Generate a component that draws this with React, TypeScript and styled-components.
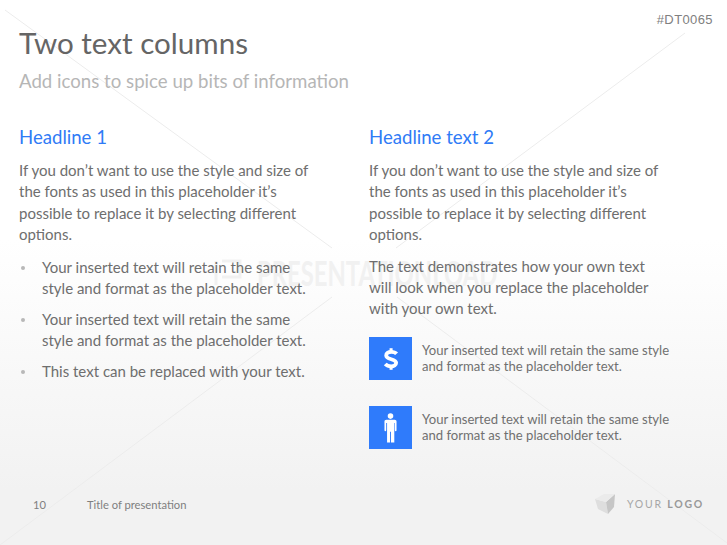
import React from "react";
import styled, { createGlobalStyle } from "styled-components";

const GlobalStyle = createGlobalStyle`
  html, body {
    margin: 0;
    padding: 0;
    background: #ffffff;
  }
`;

const bullets = [
  ["Your inserted text will retain the same", "style and format as the placeholder text."],
  ["Your inserted text will retain the same", "style and format as the placeholder text."],
  ["This text can be replaced with your text."],
];

const intro = [
  "If you don’t want to use the style and size of",
  "the fonts as used in this placeholder it’s",
  "possible to replace it by selecting different",
  "options.",
];

function DollarIcon() {
  return (
    <svg width="16" height="26" viewBox="0 0 20 28">
      <path
        d="M17 7.500C15.500 5.800 13 5 10.200 5 6.600 5 4 6.800 4 9.600c0 6 12.400 3.400 12.400 9.200 0 2.900-2.800 4.400-6.200 4.400-3 0-5.600-1-7.400-2.900"
        fill="none"
        stroke="#fff"
        strokeWidth="4.800"
      />
      <rect x="8.200" y="0.500" width="3.800" height="5" fill="#fff" />
      <rect x="8.200" y="22.500" width="3.800" height="5" fill="#fff" />
    </svg>
  );
}

function PersonIcon() {
  return (
    <svg width="13" height="32" viewBox="0 0 14 32" fill="#fff">
      <circle cx="7" cy="3.200" r="3" />
      <path d="M2.500 7h9c1.200 0 2 .8 2 2v9.500c0 1.300-1.800 1.300-1.800 0V10.500h-.6V31.500H7.500V20h-1v11.500H3.300V10.500h-.9v8c0 1.300-1.900 1.300-1.900 0V9c0-1.200.8-2 2-2z" />
    </svg>
  );
}

function LogoCube() {
  return (
    <svg width="20" height="21" viewBox="0 0 20 21">
      <path d="M0 5 L11 8 L13 20 L3 15z" fill="#dedede" />
      <path d="M11 8 L20 0 L19 13 L13 20z" fill="#c6c6c6" />
      <path d="M0 5 L9 0 L20 0 L11 8z" fill="#ebebeb" />
    </svg>
  );
}

function WatermarkMark() {
  return (
    <svg width="28" height="28" viewBox="0 0 28 28" fill="none" stroke="#f1f1f1" strokeWidth="3">
      <path d="M2 2v24" />
      <path d="M8 2h18v16H8" />
    </svg>
  );
}

export default function App() {
  return (
    <Page>
      <GlobalStyle />
      <Watermark aria-hidden="true">
        <svg width="727" height="545" viewBox="0 0 727 545">
          <g stroke="#ececec" strokeWidth="1" fill="none">
            <line x1="5" y1="10" x2="332" y2="248" />
            <line x1="685" y1="33" x2="396" y2="248" />
            <line x1="332" y1="297" x2="0" y2="545" />
            <line x1="397" y1="297" x2="727" y2="543" />
          </g>
        </svg>
        <WatermarkBrand>
          <WatermarkMark />
          <WatermarkText>PRESENTATIONLOAD</WatermarkText>
        </WatermarkBrand>
      </Watermark>

      <ItemCode>#DT0065</ItemCode>

      <Header>
        <Title>Two text columns</Title>
        <Subtitle>Add icons to spice up bits of information</Subtitle>
      </Header>

      <Columns>
        <Column>
          <Headline>Headline 1</Headline>
          <Paragraph>
            {intro.map((l) => (
              <Line key={l}>{l}</Line>
            ))}
          </Paragraph>
          <BulletList>
            {bullets.map((b, i) => (
              <Bullet key={i}>
                {b.map((l) => (
                  <Line key={l}>{l}</Line>
                ))}
              </Bullet>
            ))}
          </BulletList>
        </Column>

        <Column>
          <Headline>Headline text 2</Headline>
          <Paragraph>
            {intro.map((l) => (
              <Line key={l}>{l}</Line>
            ))}
          </Paragraph>
          <Paragraph>
            <Line>The text demonstrates how your own text</Line>
            <Line>will look when you replace the placeholder</Line>
            <Line>with your own text.</Line>
          </Paragraph>
          <IconRows>
            <IconRow>
              <IconBox>
                <DollarIcon />
              </IconBox>
              <IconText>
                <Line>Your inserted text will retain the same style</Line>
                <Line>and format as the placeholder text.</Line>
              </IconText>
            </IconRow>
            <IconRow>
              <IconBox>
                <PersonIcon />
              </IconBox>
              <IconText>
                <Line>Your inserted text will retain the same style</Line>
                <Line>and format as the placeholder text.</Line>
              </IconText>
            </IconRow>
          </IconRows>
        </Column>
      </Columns>

      <Footer>
        <PageNumber>10</PageNumber>
        <FooterTitle>Title of presentation</FooterTitle>
        <Logo>
          <LogoCube />
          <LogoText>
            YOUR <b>LOGO</b>
          </LogoText>
        </Logo>
      </Footer>
    </Page>
  );
}

const Page = styled.div`
  position: relative;
  width: 727px;
  height: 545px;
  overflow: hidden;
  box-sizing: border-box;
  padding: 13px 14px 0 19px;
  display: flex;
  flex-direction: column;
  font-family: "Lato", "Liberation Sans", sans-serif;
  color: #6e6e6e;
  background: linear-gradient(#ffffff 0, #ffffff 240px, #f2f2f2 490px, #f2f2f2 100%);
`;

const Watermark = styled.div`
  position: absolute;
  inset: 0;
  pointer-events: none;
`;

const WatermarkBrand = styled.div`
  position: absolute;
  left: 214px;
  top: 259px;
  display: flex;
  align-items: center;
  gap: 15px;
`;

const WatermarkText = styled.span`
  display: block;
  width: 250px;
  font-size: 34px;
  font-weight: 700;
  line-height: 28px;
  color: #f1f1f1;
  white-space: nowrap;
  transform: scaleX(0.7);
  transform-origin: left center;
`;

const ItemCode = styled.div`
  position: relative;
  align-self: flex-end;
  font-family: "Liberation Sans", sans-serif;
  font-size: 13px;
  line-height: 14px;
  color: #808080;
  letter-spacing: 0.400px;
`;

const Header = styled.header`
  position: relative;
  margin-top: -2px;
`;

const Title = styled.h1`
  margin: 0;
  font-size: 29.600px;
  font-weight: 400;
  line-height: 36px;
  color: #656565;
`;

const Subtitle = styled.h2`
  margin: 8px 0 0;
  font-size: 18.650px;
  font-weight: 400;
  line-height: 24px;
  color: #b6b6b6;
`;

const Columns = styled.main`
  position: relative;
  display: grid;
  grid-template-columns: 350px 1fr;
  margin-top: 32px;
`;

const Column = styled.section`
  display: flex;
  flex-direction: column;
`;

const Headline = styled.h3`
  margin: 0 0 11px;
  font-size: 18.600px;
  font-weight: 400;
  line-height: 24px;
  color: #2f7bf6;
`;

const Paragraph = styled.p`
  margin: 0 0 10.500px;
  font-size: 15px;
  line-height: 21.300px;
  color: #6e6e6e;
`;

const Line = styled.span`
  display: block;
  white-space: nowrap;
`;

const BulletList = styled.ul`
  margin: 1px 0 0;
  padding: 0;
  list-style: none;
  display: flex;
  flex-direction: column;
  gap: 10px;
`;

const Bullet = styled.li`
  position: relative;
  padding-left: 23px;
  font-size: 15px;
  line-height: 21px;
  color: #6e6e6e;

  &::before {
    content: "";
    position: absolute;
    left: 2px;
    top: 9px;
    width: 4px;
    height: 4px;
    border-radius: 50%;
    background: #b8b8b8;
  }
`;

const IconRows = styled.div`
  display: flex;
  flex-direction: column;
  gap: 26px;
  margin-top: 7px;
`;

const IconRow = styled.div`
  display: flex;
  align-items: center;
  gap: 10px;
`;

const IconBox = styled.div`
  width: 43px;
  height: 43px;
  flex: none;
  display: flex;
  align-items: center;
  justify-content: center;
  background: #2f7bfb;
`;

const IconText = styled.div`
  font-size: 13.100px;
  line-height: 15.500px;
  color: #707070;
`;

const Footer = styled.footer`
  position: absolute;
  left: 33px;
  right: 23px;
  top: 493px;
  display: flex;
  align-items: center;
  height: 22px;
  font-size: 11.200px;
  color: #7f7f7f;
`;

const PageNumber = styled.span`
  width: 54px;
`;

const FooterTitle = styled.span`
  flex: 1;
`;

const Logo = styled.div`
  display: flex;
  align-items: center;
  gap: 12px;
`;

const LogoText = styled.span`
  font-size: 10.500px;
  letter-spacing: 1.750px;
  color: #a6a6a6;

  b {
    font-weight: 700;
    color: #999999;
  }
`;
